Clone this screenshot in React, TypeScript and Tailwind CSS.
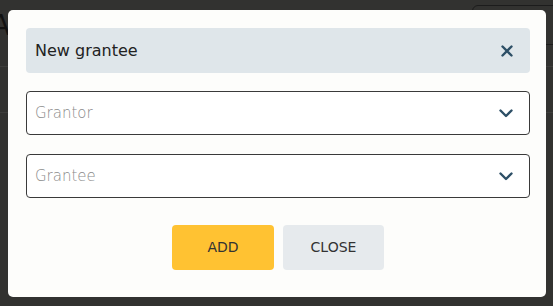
import React from "react";

const font = { fontFamily: '"DejaVu Sans", "Noto Sans", sans-serif' };

function Chevron() {
  return (
    <svg width="14" height="9" viewBox="0 0 14 9" fill="none" className="shrink-0">
      <path d="M1.5 1.5 L7 7 L12.5 1.5" stroke="#2d4f66" strokeWidth="2.4" strokeLinecap="round" strokeLinejoin="round" />
    </svg>
  );
}

function SelectBox({ placeholder }: { placeholder: string }) {
  return (
    <div className="flex h-[44px] items-center justify-between rounded-[4px] border border-[#3a3a3a] bg-white pl-[8px] pr-[16px]">
      <span className="text-[15px] font-light text-[#8a8a8a]">{placeholder}</span>
      <Chevron />
    </div>
  );
}

export default function App() {
  return (
    <div className="relative h-[306px] w-[553px] overflow-hidden bg-[#323230]" style={font}>
      {/* page content behind the overlay */}
      <div className="absolute left-[-9px] top-[12px] text-[28px] leading-none text-[#111]">A</div>
      <div className="absolute left-0 top-[66px] h-px w-full bg-[#3e3e3c]" />
      <div className="absolute left-0 top-[112px] h-px w-full bg-[#3e3e3c]" />
      <div className="absolute left-[472px] top-[5px] h-[40px] w-[120px] rounded-[6px] border border-[#1c1c1c]" />

      {/* modal */}
      <div className="absolute left-[8px] top-[10px] flex h-[287px] w-[538px] flex-col rounded-[5px] bg-[#fdfdfb] pl-[18px] pr-[16px] pt-[18px]">
        <div className="flex h-[45px] items-center justify-between rounded-[4px] bg-[#dfe6ea] pl-[9px] pr-[17px]">
          <span className="text-[16px] text-[#222]">New grantee</span>
          <svg width="12" height="12" viewBox="0 0 12 12" fill="none">
            <path d="M1.5 1.5 L10.5 10.5 M10.5 1.5 L1.5 10.5" stroke="#2d4f66" strokeWidth="2.4" strokeLinecap="round" />
          </svg>
        </div>
        <div className="mt-[18px]">
          <SelectBox placeholder="Grantor" />
        </div>
        <div className="mt-[19px]">
          <SelectBox placeholder="Grantee" />
        </div>
        <div className="mt-[27px] flex justify-center gap-[9px]">
          <button className="h-[45px] w-[102px] rounded-[4px] bg-[#ffc232] text-[14px] font-medium text-[#333]">ADD</button>
          <button className="h-[45px] w-[101px] rounded-[4px] bg-[#e6eaed] text-[14px] font-medium text-[#333]">CLOSE</button>
        </div>
      </div>
    </div>
  );
}
